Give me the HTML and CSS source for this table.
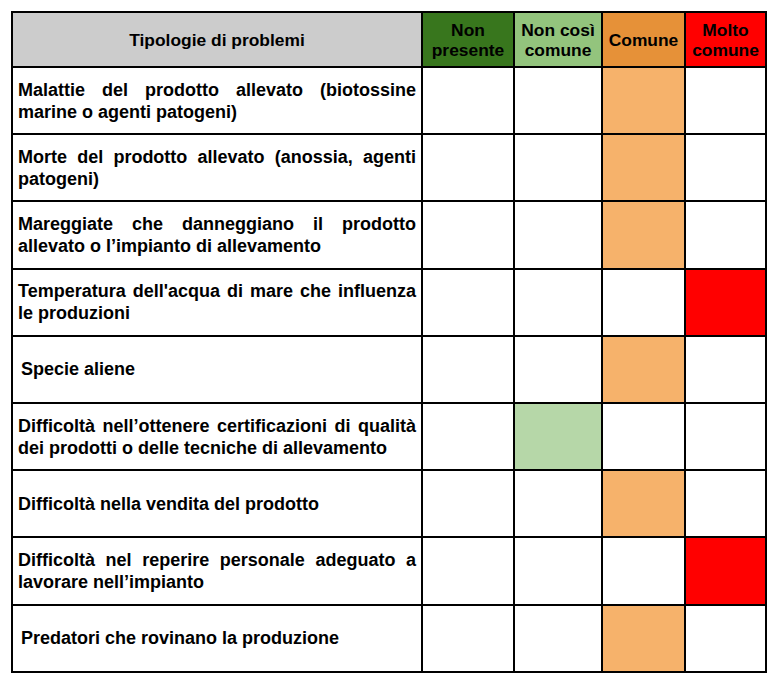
FILE: index.html
```html
<!DOCTYPE html>
<html lang="it">
<head>
<meta charset="utf-8">
<title>Tipologie di problemi</title>
<link rel="stylesheet" href="styles.css">
</head>
<body>
<table class="grid">
  <colgroup>
    <col class="c-main">
    <col class="c-1">
    <col class="c-2">
    <col class="c-3">
    <col class="c-4">
  </colgroup>
  <thead>
    <tr class="head">
      <th class="h-main">Tipologie di problemi</th>
      <th class="h-none">Non<br>presente</th>
      <th class="h-rare">Non così<br>comune</th>
      <th class="h-common">Comune</th>
      <th class="h-very">Molto<br>comune</th>
    </tr>
  </thead>
  <tbody>
    <tr>
      <td class="label">Malattie del prodotto allevato (biotossine marine o agenti patogeni)</td>
      <td></td><td></td><td class="v-common"></td><td></td>
    </tr>
    <tr>
      <td class="label">Morte del prodotto allevato (anossia, agenti patogeni)</td>
      <td></td><td></td><td class="v-common"></td><td></td>
    </tr>
    <tr>
      <td class="label">Mareggiate che danneggiano il prodotto allevato o l’impianto di allevamento</td>
      <td></td><td></td><td class="v-common"></td><td></td>
    </tr>
    <tr>
      <td class="label">Temperatura dell'acqua di mare che influenza le produzioni</td>
      <td></td><td></td><td></td><td class="v-very"></td>
    </tr>
    <tr>
      <td class="label indent">Specie aliene</td>
      <td></td><td></td><td class="v-common"></td><td></td>
    </tr>
    <tr>
      <td class="label">Difficoltà nell’ottenere certificazioni di qualità dei prodotti o delle tecniche di allevamento</td>
      <td></td><td class="v-rare"></td><td></td><td></td>
    </tr>
    <tr>
      <td class="label">Difficoltà nella vendita del prodotto</td>
      <td></td><td></td><td class="v-common"></td><td></td>
    </tr>
    <tr>
      <td class="label">Difficoltà nel reperire personale adeguato a lavorare nell’impianto</td>
      <td></td><td></td><td></td><td class="v-very"></td>
    </tr>
    <tr>
      <td class="label indent">Predatori che rovinano la produzione</td>
      <td></td><td></td><td class="v-common"></td><td></td>
    </tr>
  </tbody>
</table>
</body>
</html>
```

FILE: styles.css
```css
html, body {
  margin: 0;
  padding: 0;
  background: #ffffff;
}

body {
  padding: 11px;
  font-family: "Liberation Sans", Arial, sans-serif;
  color: #000000;
}

.grid {
  border-collapse: collapse;
  table-layout: fixed;
  width: 756px;
  border: 2px solid #000;
}

.c-main { width: 410px; }
.c-1 { width: 92px; }
.c-2 { width: 88px; }
.c-3 { width: 83px; }
.c-4 { width: 81px; }

.grid th,
.grid td {
  border: 2px solid #000;
  padding: 0;
}

.head {
  height: 55px;
}

.head th {
  font-size: 17.4px;
  font-weight: bold;
  line-height: 20px;
  text-align: center;
  vertical-align: middle;
}

.h-main { background: #cccccc; }
.h-none { background: #38761d; }
.h-rare { background: #93c47d; }
.h-common { background: #e69138; }
.h-very { background: #ff0000; }

.grid tbody tr {
  height: 67.2px;
}

.label {
  font-size: 18px;
  font-weight: bold;
  line-height: 22px;
  text-align: justify;
  vertical-align: middle;
  padding: 0 5px 0 5px !important;
}

.label.indent {
  padding-left: 8px !important;
}

.v-common { background: #f6b26b; }
.v-rare { background: #b6d7a8; }
.v-very { background: #ff0000; }
```
